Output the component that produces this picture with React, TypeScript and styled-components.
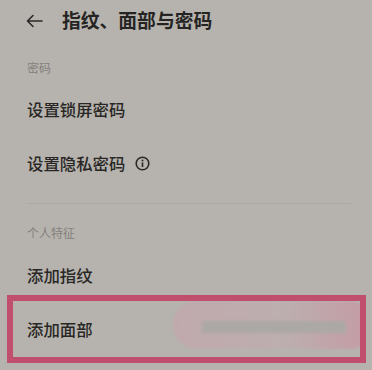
import styled, { createGlobalStyle } from 'styled-components';

const GlobalStyle = createGlobalStyle`
    html, body {
        margin: 0;
        padding: 0;
        background: #b6b3ae;
    }
    body {
        font-family: "Noto Sans CJK SC", "Noto Sans", sans-serif;
        color: #2b2927;
    }
`;

interface RowProps {
    label: string;
    info?: boolean;
    highlighted?: boolean;
}

const Row = ({ label, info, highlighted }: RowProps) => (
    <RowWrapper>
        <RowLabel>{label}</RowLabel>
        {info && (
            <InfoIcon width="15" height="15" viewBox="0 0 15 15">
                <circle cx="7.5" cy="7.5" r="6.3" fill="none" stroke="#2b2927" strokeWidth="1.6" />
                <circle cx="7.5" cy="4.6" r="1" fill="#2b2927" />
                <rect x="6.7" y="6.4" width="1.6" height="4.6" fill="#2b2927" />
            </InfoIcon>
        )}
        {highlighted && (
            <>
                <Redaction>
                    <RedactionBar />
                </Redaction>
                <Highlight />
            </>
        )}
    </RowWrapper>
);

const App = () => {
    return (
        <Page>
            <GlobalStyle />
            <Header>
                <BackButton width="18" height="14" viewBox="0 0 18 14">
                    <path
                        d="M17 7H2.5M8 1.5L2.5 7L8 12.5"
                        fill="none"
                        stroke="#2b2927"
                        strokeWidth="1.6"
                        strokeLinecap="round"
                        strokeLinejoin="round"
                    />
                </BackButton>
                <Title>指纹、面部与密码</Title>
            </Header>
            <SectionLabel>密码</SectionLabel>
            <Row label="设置锁屏密码" />
            <Row label="设置隐私密码" info />
            <Divider />
            <SectionLabel $second>个人特征</SectionLabel>
            <Row label="添加指纹" />
            <Row label="添加面部" highlighted />
        </Page>
    );
};

const Page = styled.div`
    width: 372px;
    height: 370px;
    overflow: hidden;
    display: flex;
    flex-direction: column;
`;

const Header = styled.div`
    height: 40px;
    display: flex;
    align-items: center;
    padding-left: 25px;
`;

const BackButton = styled.svg`
    display: block;
    margin-right: 19px;
    margin-top: 1px;
`;

const Title = styled.div`
    font-size: 18.8px;
    font-weight: 600;
    line-height: 24px;
    color: #262423;
`;

const SectionLabel = styled.div<{ $second?: boolean }>`
    font-size: 12px;
    line-height: 16px;
    color: #83807c;
    padding: ${(p) => (p.$second ? '21px 27px 7px' : '20px 27px 6px')};
`;

const RowWrapper = styled.div`
    position: relative;
    height: 54px;
    display: flex;
    align-items: center;
    padding-left: 27px;
`;

const RowLabel = styled.div`
    font-size: 16.4px;
    font-weight: 500;
    line-height: 22px;
    color: #292725;
`;

const InfoIcon = styled.svg`
    display: block;
    margin-left: 10px;
`;

const Divider = styled.div`
    height: 1px;
    background: #aba8a3;
    margin: 13px 21px 0 27px;
`;

const Highlight = styled.div`
    position: absolute;
    left: 7px;
    right: 6px;
    top: -7px;
    bottom: -7px;
    border: 6px solid #bf4f6d;
    pointer-events: none;
`;

const Redaction = styled.div`
    position: absolute;
    left: 173px;
    right: 9px;
    top: -1px;
    bottom: 7px;
    border-radius: 24px 10px 10px 24px;
    background: linear-gradient(90deg, #c0a9ad 0%, #bcaeaf 60%, #c49ca6 100%);
    filter: blur(1.5px);
    display: flex;
    align-items: center;
    padding-left: 29px;
`;

const RedactionBar = styled.div`
    width: 144px;
    height: 12px;
    margin-top: 4px;
    background: #aca8a5;
`;

export default App;
